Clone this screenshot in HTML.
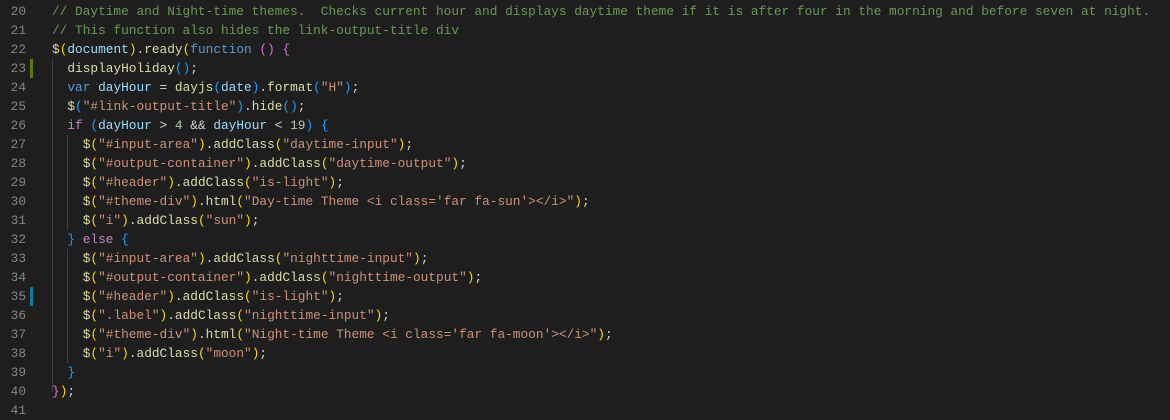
<!DOCTYPE html><html><head><style>
body{margin:0;background:#1e1e1e;width:1170px;height:413px;overflow:hidden;font-family:"Liberation Mono",monospace;font-size:12.8px;}
.l{position:absolute;left:0;height:19px;line-height:19px;white-space:pre;color:#d4d4d4;}
.n{position:absolute;left:0;width:26px;text-align:right;color:#858585;}
.c{position:absolute;left:52px;}
.cm{color:#6a9955}.y{color:#dcdcaa}.v{color:#9cdcfe}.k{color:#569cd6}.s{color:#ce9178}.nu{color:#b5cea8}.p{color:#c586c0}
.g{color:#ffd700}.m{color:#da70d6}.b{color:#179fff}
.guide{position:absolute;width:1px;background:#404040;}
</style></head><body>
<div class="guide" style="left:52px;top:59px;height:333px"></div>
<div class="guide" style="left:67px;top:135px;height:95px"></div>
<div class="guide" style="left:67px;top:249px;height:114px"></div>
<div style="position:absolute;left:30px;top:59px;width:3px;height:19px;background:#587c0c"></div>
<div style="position:absolute;left:30px;top:287px;width:3px;height:19px;background:#0c7d9d"></div>
<div class="l" style="top:2px"><span class="n">20</span><span class="c cm">// Daytime and Night-time themes.  Checks current hour and displays daytime theme if it is after four in the morning and before seven at night.</span></div>
<div class="l" style="top:21px"><span class="n">21</span><span class="c cm">// This function also hides the link-output-title div</span></div>
<div class="l" style="top:40px"><span class="n">22</span><span class="c"><span class="y">$</span><span class="g">(</span><span class="v">document</span><span class="g">)</span>.<span class="y">ready</span><span class="g">(</span><span class="k">function</span> <span class="m">()</span> <span class="m">{</span></span></div>
<div class="l" style="top:59px"><span class="n">23</span><span class="c">  <span class="y">displayHoliday</span><span class="b">()</span>;</span></div>
<div class="l" style="top:78px"><span class="n">24</span><span class="c">  <span class="k">var</span> <span class="v">dayHour</span> = <span class="y">dayjs</span><span class="b">(</span><span class="v">date</span><span class="b">)</span>.<span class="y">format</span><span class="b">(</span><span class="s">"H"</span><span class="b">)</span>;</span></div>
<div class="l" style="top:97px"><span class="n">25</span><span class="c">  <span class="y">$</span><span class="b">(</span><span class="s">"#link-output-title"</span><span class="b">)</span>.<span class="y">hide</span><span class="b">()</span>;</span></div>
<div class="l" style="top:116px"><span class="n">26</span><span class="c">  <span class="p">if</span> <span class="b">(</span><span class="v">dayHour</span> &gt; <span class="nu">4</span> &amp;&amp; <span class="v">dayHour</span> &lt; <span class="nu">19</span><span class="b">)</span> <span class="b">{</span></span></div>
<div class="l" style="top:135px"><span class="n">27</span><span class="c">    <span class="y">$</span><span class="g">(</span><span class="s">"#input-area"</span><span class="g">)</span>.<span class="y">addClass</span><span class="g">(</span><span class="s">"daytime-input"</span><span class="g">)</span>;</span></div>
<div class="l" style="top:154px"><span class="n">28</span><span class="c">    <span class="y">$</span><span class="g">(</span><span class="s">"#output-container"</span><span class="g">)</span>.<span class="y">addClass</span><span class="g">(</span><span class="s">"daytime-output"</span><span class="g">)</span>;</span></div>
<div class="l" style="top:173px"><span class="n">29</span><span class="c">    <span class="y">$</span><span class="g">(</span><span class="s">"#header"</span><span class="g">)</span>.<span class="y">addClass</span><span class="g">(</span><span class="s">"is-light"</span><span class="g">)</span>;</span></div>
<div class="l" style="top:192px"><span class="n">30</span><span class="c">    <span class="y">$</span><span class="g">(</span><span class="s">"#theme-div"</span><span class="g">)</span>.<span class="y">html</span><span class="g">(</span><span class="s">"Day-time Theme &lt;i class='far fa-sun'&gt;&lt;/i&gt;"</span><span class="g">)</span>;</span></div>
<div class="l" style="top:211px"><span class="n">31</span><span class="c">    <span class="y">$</span><span class="g">(</span><span class="s">"i"</span><span class="g">)</span>.<span class="y">addClass</span><span class="g">(</span><span class="s">"sun"</span><span class="g">)</span>;</span></div>
<div class="l" style="top:230px"><span class="n">32</span><span class="c">  <span class="b">}</span> <span class="p">else</span> <span class="b">{</span></span></div>
<div class="l" style="top:249px"><span class="n">33</span><span class="c">    <span class="y">$</span><span class="g">(</span><span class="s">"#input-area"</span><span class="g">)</span>.<span class="y">addClass</span><span class="g">(</span><span class="s">"nighttime-input"</span><span class="g">)</span>;</span></div>
<div class="l" style="top:268px"><span class="n">34</span><span class="c">    <span class="y">$</span><span class="g">(</span><span class="s">"#output-container"</span><span class="g">)</span>.<span class="y">addClass</span><span class="g">(</span><span class="s">"nighttime-output"</span><span class="g">)</span>;</span></div>
<div class="l" style="top:287px"><span class="n">35</span><span class="c">    <span class="y">$</span><span class="g">(</span><span class="s">"#header"</span><span class="g">)</span>.<span class="y">addClass</span><span class="g">(</span><span class="s">"is-light"</span><span class="g">)</span>;</span></div>
<div class="l" style="top:306px"><span class="n">36</span><span class="c">    <span class="y">$</span><span class="g">(</span><span class="s">".label"</span><span class="g">)</span>.<span class="y">addClass</span><span class="g">(</span><span class="s">"nighttime-input"</span><span class="g">)</span>;</span></div>
<div class="l" style="top:325px"><span class="n">37</span><span class="c">    <span class="y">$</span><span class="g">(</span><span class="s">"#theme-div"</span><span class="g">)</span>.<span class="y">html</span><span class="g">(</span><span class="s">"Night-time Theme &lt;i class='far fa-moon'&gt;&lt;/i&gt;"</span><span class="g">)</span>;</span></div>
<div class="l" style="top:344px"><span class="n">38</span><span class="c">    <span class="y">$</span><span class="g">(</span><span class="s">"i"</span><span class="g">)</span>.<span class="y">addClass</span><span class="g">(</span><span class="s">"moon"</span><span class="g">)</span>;</span></div>
<div class="l" style="top:363px"><span class="n">39</span><span class="c">  <span class="b">}</span></span></div>
<div class="l" style="top:382px"><span class="n">40</span><span class="c"><span class="m">}</span><span class="g">)</span>;</span></div>
<div class="l" style="top:401px"><span class="n">41</span></div>
</body></html>
